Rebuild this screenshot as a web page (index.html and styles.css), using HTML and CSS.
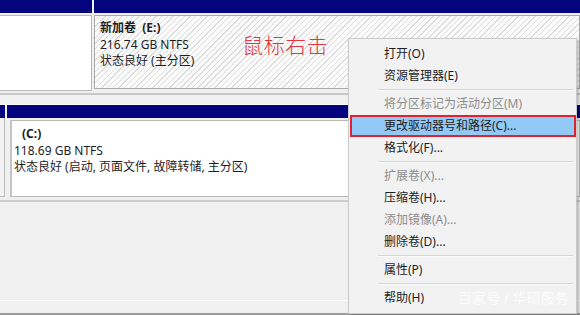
FILE: index.html
```html
<!DOCTYPE html>
<html lang="zh-CN">
<head>
  <meta charset="UTF-8" />
  <title>磁盘管理</title>
  <link rel="stylesheet" href="styles.css">
</head>
<body>

  <div class="disk-row top-row">
    <div class="part part-blank">
      <div class="part-head"></div>
      <div class="part-body"></div>
    </div>
    <div class="part part-e">
      <div class="part-head"></div>
      <div class="part-body hatched">
        <div class="vol-info">
          <div class="vol-name">新加卷&nbsp; (E:)</div>
          <div>216.74 GB NTFS</div>
          <div>状态良好 (主分区)</div>
        </div>
        <div class="note">鼠标右击</div>
      </div>
    </div>
  </div>

  <div class="row-gap"></div>

  <div class="disk-row c-row">
    <div class="part part-strip">
      <div class="part-head"></div>
      <div class="part-body"></div>
    </div>
    <div class="part part-c">
      <div class="part-head"></div>
      <div class="part-body">
        <div class="vol-info">
          <div class="vol-name indent">(C:)</div>
          <div>118.69 GB NTFS</div>
          <div>状态良好 (启动, 页面文件, 故障转储, 主分区)</div>
        </div>
      </div>
    </div>
  </div>

  <div class="filler"></div>
  <div class="legend"></div>

  <div class="menu">
    <div class="item">打开(O)</div>
    <div class="item">资源管理器(E)</div>
    <div class="sep"></div>
    <div class="item off">将分区标记为活动分区(M)</div>
    <div class="item active">更改驱动器号和路径(C)...</div>
    <div class="item">格式化(F)...</div>
    <div class="sep"></div>
    <div class="item off">扩展卷(X)...</div>
    <div class="item">压缩卷(H)...</div>
    <div class="item off">添加镜像(A)...</div>
    <div class="item">删除卷(D)...</div>
    <div class="sep"></div>
    <div class="item">属性(P)</div>
    <div class="sep"></div>
    <div class="item">帮助(H)</div>
  </div>

  <div class="watermark">百家号 / 华硕服务</div>

</body>
</html>
```

FILE: styles.css
```css
html, body {
  margin: 0;
  height: 100%;
}

body {
  position: relative;
  width: 580px;
  height: 315px;
  overflow: hidden;
  display: flex;
  flex-direction: column;
  background: #f0f0f0;
  font-family: "Noto Sans", "Noto Sans CJK SC", sans-serif;
  font-size: 12px;
  color: #1e1e1e;
}

.disk-row {
  display: flex;
}

.top-row {
  height: 91px;
}

.c-row {
  height: 92px;
}

.part {
  display: flex;
  flex-direction: column;
}

.part-head {
  height: 13px;
  background: #04047f;
}

.part-body {
  flex: 1;
  margin-top: 2px;
  border: 1px solid #b9b9b9;
  background: #fff;
}

.part-blank {
  width: 92px;
}

.part-blank .part-body {
  border-left: none;
}

.part-e {
  flex: 1;
  margin-left: 2px;
}

.part-e .part-body {
  display: flex;
  align-items: flex-start;
  margin-bottom: 2px;
  padding: 4px 0 0 5px;
  border-color: #a9a9a9;
}

.hatched {
  background: repeating-linear-gradient(135deg, #fbfbfb 0 3px, #dedede 3px 4px);
}

.part-strip {
  width: 5px;
}

.part-strip .part-body {
  margin-top: 0;
  border-left: none;
  border-top: none;
  background: #f4f4f4;
}

.part-c {
  flex: 1;
  margin-left: 2px;
}

.part-c .part-body {
  padding: 5px 0 0 2px;
  margin-left: 3px;
  border-left: 2px solid #c4c4c4;
}

.vol-info {
  line-height: 16.5px;
  white-space: nowrap;
}

.vol-name {
  font-weight: bold;
}

.indent {
  padding-left: 8px;
}

.note {
  margin: 11px 0 0 48px;
  font-family: "Noto Sans CJK SC", sans-serif;
  font-size: 21px;
  font-weight: 300;
  line-height: 26px;
  color: #e2363e;
  letter-spacing: 0.5px;
}

.row-gap {
  height: 12px;
  box-sizing: border-box;
  margin-top: 2px;
  border-top: 2px solid #c8c8c8;
  border-bottom: 1px solid #fafafa;
}

.filler {
  height: 98px;
  border-top: 2px solid #cdcdcd;
  margin-top: 3px;
}

.legend {
  flex: 1;
  border-top: 1px solid #fbfbfb;
  border-bottom: 2px solid #9c9c9c;
}

/* context menu */
.menu {
  position: absolute;
  left: 348px;
  top: 38px;
  width: 227px;
  height: 270px;
  padding-top: 4px;
  background: #f2f2f2;
  border: 1px solid #cbcbcb;
  box-shadow: 2px 2px 3px rgba(0, 0, 0, 0.25);
}

.item {
  height: 22px;
  line-height: 22px;
  padding-left: 35px;
  white-space: nowrap;
}

.item.off {
  color: #8d8d8d;
}

.item.active {
  margin-left: 1px;
  padding-left: 32px;
  height: 18px;
  line-height: 18px;
  border: 2px solid #e0222f;
  background: #93c9f6;
}

.sep {
  height: 6px;
  box-sizing: border-box;
  margin: 0 3px 0 29px;
  padding-top: 2px;
}

.sep::before {
  content: "";
  display: block;
  border-top: 1px solid #d6d6d6;
  border-bottom: 1px solid #fbfbfb;
}

.watermark {
  position: absolute;
  left: 458px;
  top: 288px;
  font-size: 14px;
  line-height: 20px;
  color: rgba(255, 255, 255, 0.85);
  white-space: nowrap;
}
```
